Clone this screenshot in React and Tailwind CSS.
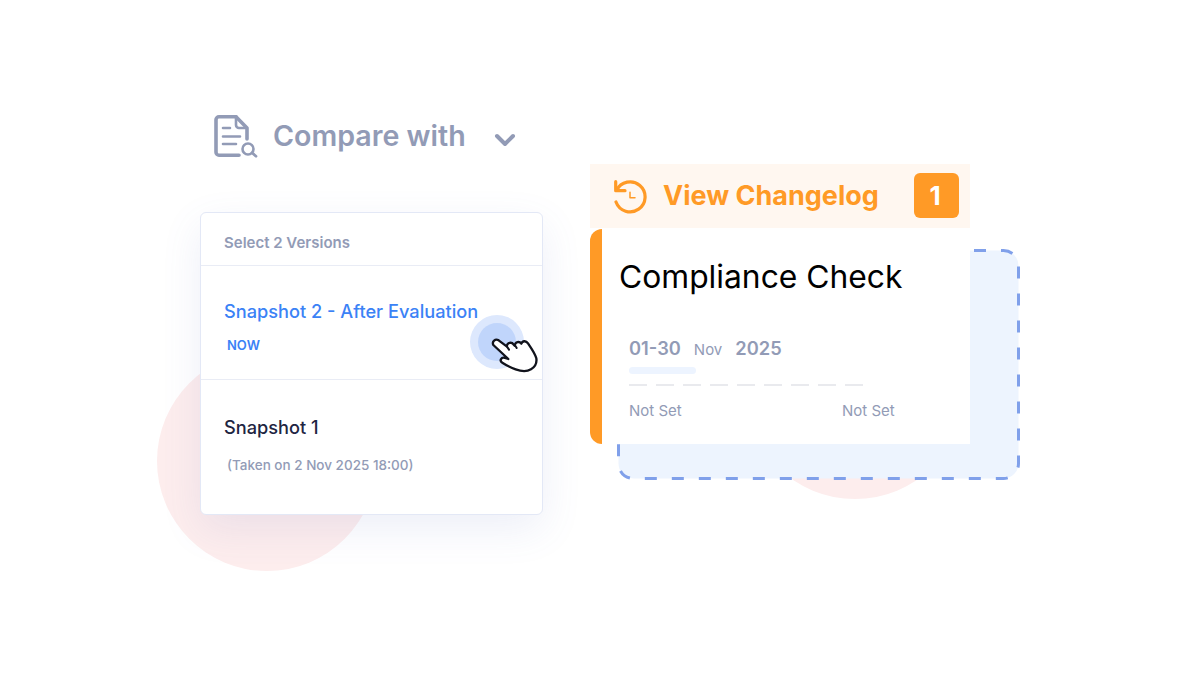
import React from 'react';

const DocSearchIcon = () => (
  <svg width="44" height="44" viewBox="0 0 44 44" fill="none" stroke="#929bb6" strokeWidth="3.6" strokeLinecap="round" strokeLinejoin="round">
    <path d="M22 2.8H5a3 3 0 0 0-3 3V38.2a3 3 0 0 0 3 3H25" />
    <path d="M22 2.8L33 14V25" />
    <path d="M22 3V11a3 3 0 0 0 3 3H32" strokeWidth="2.6" />
    <path d="M9 14H16M9 22.5H26M9 30H22" strokeWidth="2.6" />
    <circle cx="34" cy="35" r="5.5" strokeWidth="2.6" />
    <path d="M38.2 39L42 42.2" strokeWidth="2.8" />
  </svg>
);

const HistoryIcon = () => (
  <svg width="36" height="36" viewBox="0 0 36 36" fill="none" stroke="#ff9a26" strokeWidth="3.2" strokeLinecap="round" strokeLinejoin="round">
    <path d="M3.6 12.3A15 15 0 1 1 3 24" />
    <path d="M2.7 3.7V12.7H12" />
    <path d="M17 14.3V19.7H22" strokeWidth="1.5" />
  </svg>
);

const HandCursor = () => (
  <svg width="50" height="42" viewBox="150 100 150 126" fill="white" stroke="#11131c" strokeWidth="7" strokeLinejoin="round" strokeLinecap="round">
    <path d="M160 136c-5-11 6-20 16-14l24 18c2-12 15-14 21-5l3 3c2-12 14-14 20-6c3-9 14-10 20-1c11 16 22 32 25 45c2 14-4 26-16 33c-14 8-30 6-46 0c-14-5-26-11-40-20c-10-6-3-18 8-14l10 3z" />
    <path d="M201 141l6 9M225 137l5 8" fill="none" strokeWidth="6" />
  </svg>
);

const App = () => {
  return (
    <div className="relative w-[1200px] h-[675px] overflow-hidden bg-white font-['Inter',sans-serif]">
      {/* Background circles */}
      <div className="absolute left-[157px] top-[351px] w-[220px] h-[220px] rounded-full bg-[#fdeded]" />
      <div className="absolute left-[745px] top-[279px] w-[220px] h-[220px] rounded-full bg-[#fdeded]" />

      {/* Compare with */}
      <div className="absolute left-[214px] top-[114px] flex items-center h-[44px]">
        <DocSearchIcon />
        <span className="ml-[15px] text-[28.6px] leading-[44px] font-semibold text-[#929bb6]">Compare with</span>
        <svg className="ml-[28px] mt-[8px]" width="22" height="14" viewBox="0 0 22 14" fill="none" stroke="#929bb6" strokeWidth="4" strokeLinecap="round" strokeLinejoin="round">
          <path d="M3 3L11 11L19 3" />
        </svg>
      </div>

      {/* Versions card */}
      <div className="absolute left-[200px] top-[212px] w-[343px] h-[303px] flex flex-col rounded-md border border-[#e3e8f6] bg-white shadow-[0_14px_40px_rgba(90,105,190,0.11)]">
        <div className="h-[53px] flex items-center pt-2 pl-[23px] border-b border-[#e9ecf5] text-[15px] font-semibold text-[#929bb6]">
          Select 2 Versions
        </div>
        <div className="h-[114px] flex flex-col border-b border-[#e9ecf5] pl-[23px] pt-[33px]">
          <span className="text-[18.2px] leading-[24px] font-medium text-[#3b82f6]">Snapshot 2 - After Evaluation</span>
          <span className="ml-[3px] mt-[13px] text-[13px] leading-[18px] font-semibold text-[#3b82f6]">NOW</span>
        </div>
        <div className="flex flex-col pl-[23px] pt-[35px]">
          <span className="text-[18.2px] leading-[24px] font-medium text-[#1e2542]">Snapshot 1</span>
          <span className="ml-[3px] mt-[17px] text-[13.5px] leading-[18px] font-medium text-[#929bb6]">(Taken on 2 Nov 2025 18:00)</span>
        </div>
      </div>

      {/* Click highlight and hand */}
      <div className="absolute left-[470px] top-[315px] w-[54px] h-[54px] rounded-full bg-[#dde8fd] flex items-center justify-center">
        <div className="w-[38px] h-[38px] rounded-full bg-[#c0d5fb]" />
      </div>
      <div className="absolute left-[490px] top-[333px]">
        <HandCursor />
      </div>

      {/* Dashed backdrop */}
      <div className="absolute left-[617px] top-[249px] w-[403px] h-[231px]">
        <svg width="403" height="231" viewBox="0 0 403 231" fill="#edf4fe">
          <rect x="1.5" y="1.5" width="400" height="228" rx="15" stroke="#80a0ea" strokeWidth="3" strokeDasharray="12 15" strokeDashoffset="10.5" />
        </svg>
      </div>

      {/* Changelog */}
      <div className="absolute left-[590px] top-[164px] w-[380px] flex flex-col">
        <div className="h-[64px] bg-[#fff7f0] flex items-center pl-[23px] pr-[11px]">
          <HistoryIcon />
          <span className="ml-[14px] text-[27px] font-bold leading-[32px] text-[#ff9a26]">View Changelog</span>
          <span className="ml-auto -mt-px w-[45px] h-[45px] pr-[3px] rounded-md bg-[#ff9a26] flex items-center justify-center text-[26px] font-bold text-white">1</span>
        </div>
        <div className="mt-px h-[215px] flex rounded-l-xl overflow-hidden">
          <div className="w-3 bg-[#ff9a26]" />
          <div className="flex-1 bg-white flex flex-col pl-[17px]">
            <h1 className="mt-[28px] text-[31.8px] leading-[40px] text-black font-normal">Compliance Check</h1>
            <div className="ml-[10px] mt-[39px] flex items-baseline text-[#929bb6]">
              <span className="text-[18.3px] leading-[24px] font-semibold">01-30</span>
              <span className="ml-[13px] text-[15px]">Nov</span>
              <span className="ml-[13px] text-[18.3px] leading-[24px] font-semibold">2025</span>
            </div>
            <div className="ml-[10px] mt-[5px] w-[67px] h-[7px] rounded-sm bg-[#edf4ff]" />
            <svg className="ml-[10px] mt-[10px]" width="234" height="2">
              <line x1="0" y1="1" x2="234" y2="1" stroke="#e2e4e9" strokeWidth="1.5" strokeDasharray="18 9" />
            </svg>
            <div className="ml-[10px] mt-[16px] flex text-[15px] leading-[18px] text-[#929bb6]">
              <span className="w-[213px]">Not Set</span>
              <span>Not Set</span>
            </div>
          </div>
        </div>
      </div>
    </div>
  );
};

export default App;
